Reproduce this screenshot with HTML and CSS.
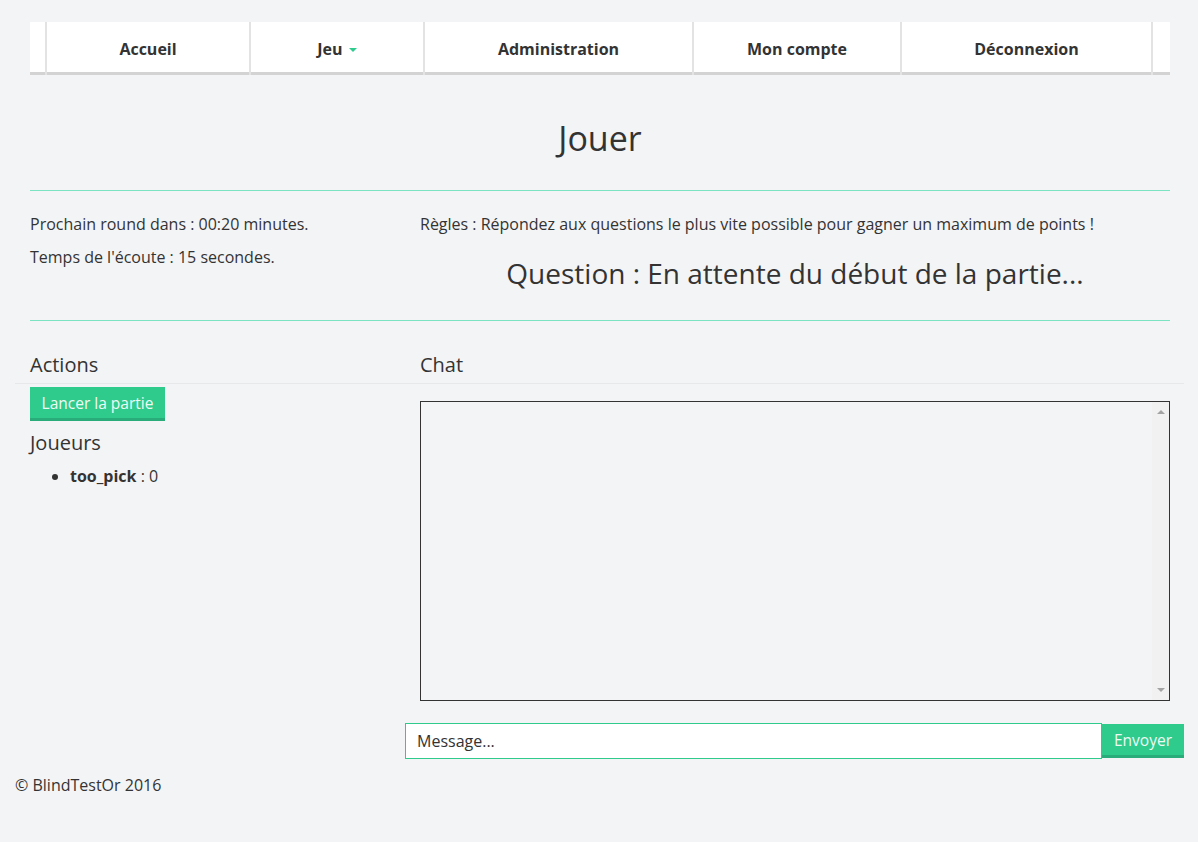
FILE: index.html
```html
<!DOCTYPE html>
<html lang="fr">
<head>
<meta charset="utf-8">
<title>Jouer - BlindTestOr</title>
<link rel="stylesheet" href="styles.css">
</head>
<body>
<div class="wrap">
  <div class="container">
    <nav class="nav">
      <ul class="nav-list">
        <li class="nav-item w-accueil"><a href="#">Accueil</a></li>
        <li class="nav-item w-jeu"><a href="#">Jeu <span class="caret"></span></a></li>
        <li class="nav-item w-admin"><a href="#">Administration</a></li>
        <li class="nav-item w-compte"><a href="#">Mon compte</a></li>
        <li class="nav-item w-deco"><a href="#">Déconnexion</a></li>
      </ul>
    </nav>

    <h1 class="page-title">Jouer</h1>
    <hr class="sep">

    <div class="info-row">
      <div class="info-left">
        <p>Prochain round dans : 00:20 minutes.</p>
        <p>Temps de l'écoute : 15 secondes.</p>
      </div>
      <div class="info-right">
        <p>Règles : Répondez aux questions le plus vite possible pour gagner un maximum de points !</p>
        <h3 class="question">Question : En attente du début de la partie...</h3>
      </div>
    </div>
    <hr class="sep sep-bottom">
  </div>

  <div class="panel-head">
    <h4 class="head-left">Actions</h4>
    <h4 class="head-right">Chat</h4>
  </div>

  <div class="panel-body">
    <div class="col-left">
      <button class="btn btn-start">Lancer la partie</button>
      <h4 class="players-title">Joueurs</h4>
      <ul class="players">
        <li><strong>too_pick</strong> : 0</li>
      </ul>
    </div>
    <div class="col-right">
      <div class="chat-box-wrap">
        <div class="chat-frame">
          <textarea class="chat-box" readonly></textarea>
          <div class="fake-scroll" aria-hidden="true">
            <span class="arrow arrow-up"></span>
            <span class="arrow arrow-down"></span>
          </div>
        </div>
      </div>
      <form class="msg-form" onsubmit="return false">
        <input class="msg-input" type="text" placeholder="Message...">
        <button class="btn btn-send" type="submit">Envoyer</button>
      </form>
    </div>
  </div>

  <footer class="footer">© BlindTestOr 2016</footer>
</div>
</body>
</html>
```

FILE: styles.css
```css
* { box-sizing: border-box; }

html, body {
  margin: 0;
  padding: 0;
  background: #f3f4f6;
  color: #333;
  font-family: "Open Sans", "Noto Sans", sans-serif;
  font-size: 16px;
  line-height: 22px;
}

.wrap {
  padding: 22px 14px 0 15px;
}

.container {
  padding: 0 14px 0 15px;
}

/* nav */
.nav {
  background: #fff;
  border-bottom: 3px solid #d3d3d3;
  height: 53px;
}
.nav-list {
  list-style: none;
  margin: 0;
  padding: 0 15px;
  display: flex;
  height: 50px;
}
.nav-item {
  border-left: 2px solid #e3e3e3;
  display: flex;
  align-items: center;
  justify-content: center;
  height: 53px;
}
.nav-item:last-child { border-right: 2px solid #e3e3e3; }
.nav-item a {
  color: #333;
  font-weight: 700;
  text-decoration: none;
  font-size: 16px;
}
.w-accueil { width: 204px; }
.w-jeu { width: 174px; }
.w-admin { width: 269px; }
.w-compte { width: 208px; }
.w-deco { width: 253px; }

.caret {
  display: inline-block;
  width: 0;
  height: 0;
  border-left: 4px solid transparent;
  border-right: 4px solid transparent;
  border-top: 4px solid #2ecb8d;
  vertical-align: middle;
  margin-left: 2px;
}

.page-title {
  font-weight: 400;
  font-size: 34px;
  line-height: 40px;
  text-align: center;
  margin: 43px 0 32px;
}

.sep {
  border: 0;
  border-top: 1px solid #7be3c1;
  margin: 0;
}

.info-row {
  display: grid;
  grid-template-columns: 390px 1fr;
  padding-top: 22px;
}
.info-row p {
  margin: 0 0 11px;
}
.question {
  font-weight: 400;
  font-size: 28px;
  line-height: 30px;
  text-align: center;
  margin: 23px 0 0;
}
.sep-bottom { margin-top: 32px; }

/* panels */
.panel-head {
  display: grid;
  grid-template-columns: 390px 1fr;
  border-bottom: 1px solid #e6e8ea;
  padding-top: 33px;
}
.panel-head h4 {
  font-weight: 400;
  font-size: 20px;
  line-height: 22px;
  margin: 0;
  padding-bottom: 7px;
}
.head-left { padding-left: 15px; }
.head-right { padding-left: 15px; }

.panel-body {
  display: grid;
  grid-template-columns: 390px 1fr;
}
.col-left { padding: 3px 0 0 15px; }

.btn {
  font-family: inherit;
  font-size: 15.5px;
  background: #2ecb8d;
  color: #eefaf4;
  border: 0;
  border-bottom: 3px solid #29ac79;
  cursor: pointer;
}
.btn-start {
  height: 34px;
  width: 135px;
  padding: 2px 0 0;
  line-height: 29px;
}

.players-title {
  font-weight: 400;
  font-size: 20px;
  line-height: 22px;
  margin: 11px 0 0;
}
.players {
  margin: 11px 0 0;
  padding-left: 40px;
}
.players li { line-height: 22px; }

.col-right { padding-top: 17px; }
.chat-box-wrap { padding: 0 14px 0 15px; }
.chat-frame {
  position: relative;
}
.chat-box {
  display: block;
  width: 100%;
  height: 300px;
  border: 1px solid #333;
  background: #f3f4f6;
  resize: none;
  overflow: hidden;
  margin: 0;
  padding: 2px 20px 2px 4px;
  font-family: inherit;
  border-radius: 0;
  outline: none;
}
.fake-scroll {
  position: absolute;
  top: 1px;
  right: 1px;
  bottom: 1px;
  width: 17px;
  background: #f1f1f1;
  display: flex;
  flex-direction: column;
  justify-content: space-between;
  align-items: center;
  padding: 8px 0 8px;
}
.arrow {
  width: 0;
  height: 0;
  border-left: 4px solid transparent;
  border-right: 4px solid transparent;
}
.arrow-up { border-bottom: 4px solid #a3a3a3; }
.arrow-down { border-top: 4px solid #a3a3a3; }

.msg-form {
  display: flex;
  margin-top: 22px;
  align-items: center;
}
.msg-input {
  flex: 1;
  height: 36px;
  border: 1px solid #2ecb8d;
  background: #fff;
  font-family: inherit;
  font-size: 16px;
  padding: 0 11px;
  color: #333;
  border-radius: 0;
  outline: none;
}
.msg-input::placeholder { color: #333; opacity: 1; }
.btn-send {
  width: 82px;
  height: 34px;
  padding: 2px 0 0;
  line-height: 29px;
}

.footer {
  margin-top: 15px;
  line-height: 22px;
}
```
